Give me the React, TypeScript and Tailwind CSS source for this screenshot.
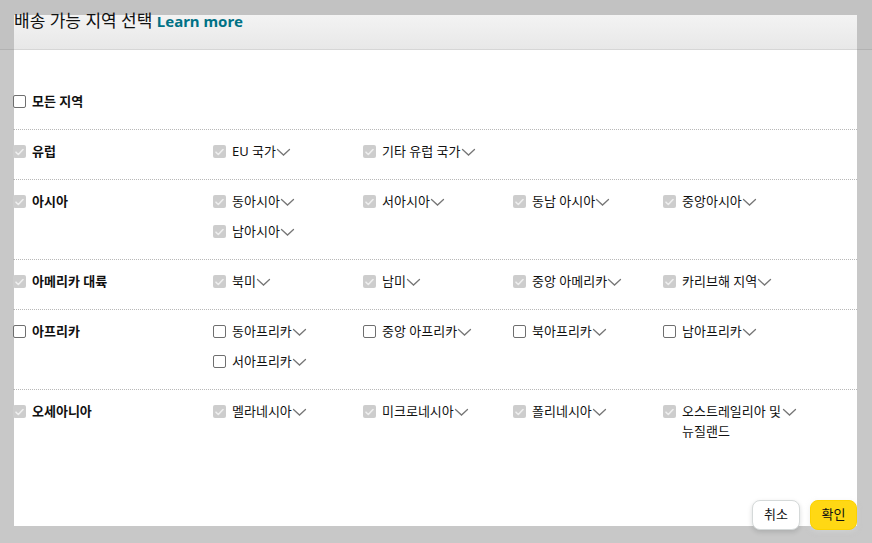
import type { ReactNode } from 'react';

type Sub = { label: string; checked: boolean };
type Region = { label: string; checked: boolean; subs: Sub[] };

const REGIONS: Region[] = [
  {
    label: '유럽',
    checked: true,
    subs: [
      { label: 'EU 국가', checked: true },
      { label: '기타 유럽 국가', checked: true },
    ],
  },
  {
    label: '아시아',
    checked: true,
    subs: [
      { label: '동아시아', checked: true },
      { label: '서아시아', checked: true },
      { label: '동남 아시아', checked: true },
      { label: '중앙아시아', checked: true },
      { label: '남아시아', checked: true },
    ],
  },
  {
    label: '아메리카 대륙',
    checked: true,
    subs: [
      { label: '북미', checked: true },
      { label: '남미', checked: true },
      { label: '중앙 아메리카', checked: true },
      { label: '카리브해 지역', checked: true },
    ],
  },
  {
    label: '아프리카',
    checked: false,
    subs: [
      { label: '동아프리카', checked: false },
      { label: '중앙 아프리카', checked: false },
      { label: '북아프리카', checked: false },
      { label: '남아프리카', checked: false },
      { label: '서아프리카', checked: false },
    ],
  },
  {
    label: '오세아니아',
    checked: true,
    subs: [
      { label: '멜라네시아', checked: true },
      { label: '미크로네시아', checked: true },
      { label: '폴리네시아', checked: true },
      { label: '오스트레일리아 및 뉴질랜드', checked: true },
    ],
  },
];

function Box({ checked }: { checked: boolean }) {
  // disabled + checked for the pre-selected regions, plain empty box otherwise
  return checked ? (
    <span className="w-[13px] h-[13px] shrink-0 rounded-[2px] bg-[#cdcdcd] flex items-center justify-center mt-[4px] mr-[6px]">
      <svg width="9" height="8" viewBox="0 0 9 8" fill="none">
        <path d="M1 4.2l2.3 2.3L8 1.5" stroke="#eeeeee" strokeWidth={1.6} strokeLinecap="round" strokeLinejoin="round" />
      </svg>
    </span>
  ) : (
    <span className="w-[13px] h-[13px] shrink-0 rounded-[2px] border border-[#6f6f6f] bg-white mt-[4px] mr-[6px]" />
  );
}

function Chevron() {
  return (
    <svg width="15" height="9" viewBox="0 0 15 9" fill="none" className="shrink-0 mt-[7px]">
      <path d="M1.5 1.5l6 5.5 6-5.5" stroke="#777" strokeWidth={1.3} strokeLinecap="round" />
    </svg>
  );
}

function Check({ checked, children }: { checked: boolean; children: ReactNode }) {
  return (
    <div className="flex items-start">
      <Box checked={checked} />
      <span className="text-[13px] leading-[20px] text-[#111] font-bold">{children}</span>
    </div>
  );
}

export default function App() {
  return (
    <div
      className="relative w-[872px] h-[543px] overflow-hidden bg-[#c8c8c8]"
      style={{ fontFamily: '"Noto Sans", "Noto Sans CJK KR", sans-serif' }}
    >
      {/* page behind the overlay */}
      <div className="h-[50px] bg-[#c2c2c2] border-b border-[#b2b2b2]" />

      {/* modal */}
      <div className="absolute left-[14px] top-[15px] w-[843px] h-[511px] bg-white flex flex-col">
        <div className="h-[35px] shrink-0 bg-gradient-to-b from-[#f3f3f3] to-[#e8e8e8] border-b border-[#d6d6d6]">
          <h1 className="-mt-[6px] leading-[24px] text-[17px] text-[#111] whitespace-nowrap">
            배송 가능 지역 선택 <span className="font-bold text-[15px] text-[#007185]">Learn more</span>
          </h1>
        </div>

        <div className="-ml-[1px] flex-1">
          <div className="pt-[41px] pb-[18px]">
            <Check checked={false}>모든 지역</Check>
          </div>

          {REGIONS.map((r) => (
            <div key={r.label} className="flex border-t border-dotted border-[#b8b8b8] pt-[11px] pb-[18px]">
              <div className="w-[200px] shrink-0">
                <Check checked={r.checked}>{r.label}</Check>
              </div>
              <div className="grid grid-cols-[150px_150px_150px_150px] gap-y-[10px]">
                {r.subs.map((s) => (
                  <div key={s.label} className="flex items-start pr-[8px]">
                    <Box checked={s.checked} />
                    <span className="max-w-[100px] text-[13px] leading-[20px] text-[#111]">{s.label}</span>
                    <Chevron />
                  </div>
                ))}
              </div>
            </div>
          ))}
        </div>

        <div className="flex justify-end gap-[10px] -mb-[4px]">
          <button className="w-[48px] h-[30px] rounded-[8px] bg-white border border-[#d5d9d9] shadow-[0_2px_5px_rgba(15,17,17,0.15)] text-[13px] text-[#0f1111]">
            취소
          </button>
          <button className="w-[47px] h-[30px] rounded-[8px] bg-[#ffd814] border border-[#fcd200] shadow-[0_2px_5px_rgba(213,217,217,0.5)] text-[13px] text-[#0f1111]">
            확인
          </button>
        </div>
      </div>
    </div>
  );
}
